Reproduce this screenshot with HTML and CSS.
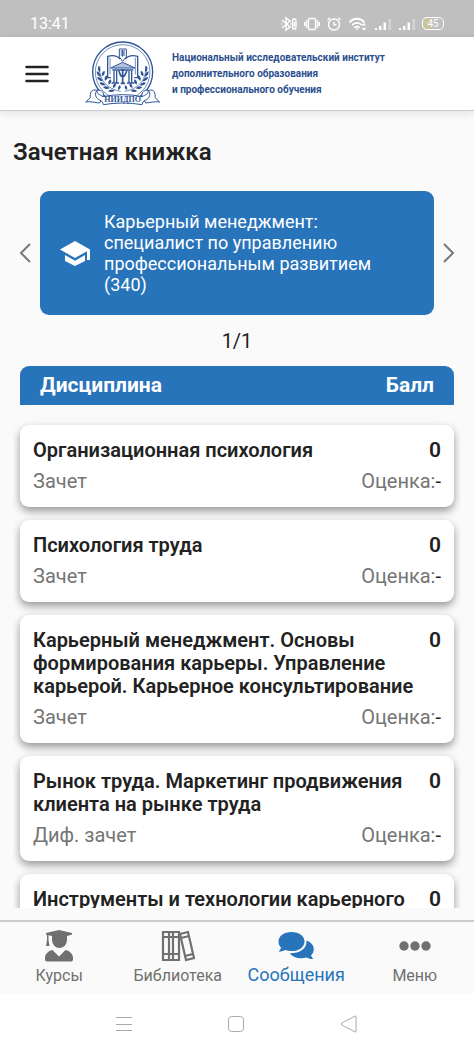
FILE: index.html
```
<!DOCTYPE html>
<html lang="ru">
<head>
    <meta charset="UTF-8">
    <meta name="viewport" content="width=device-width, initial-scale=1.0">
    <title>Зачетная книжка</title>
    <link rel="stylesheet" href="styles.css">
</head>
<body>
    <div class="status-bar">
        <span class="clock">13:41</span>
        <div class="status-icons">
            <svg width="18" height="16" viewBox="0 0 18 16" fill="none" stroke="#fff" stroke-width="1.4">
                <path d="M2 4l8 7-4 3V2l4 3-8 7M1 8h1M10 8h1"/>
                <rect x="12.500" y="3" width="3.500" height="10" rx="1.500"/>
                <path d="M14.300 6v5"/>
            </svg>
            <svg width="16" height="16" viewBox="0 0 16 16" fill="none" stroke="#fff" stroke-width="1.400">
                <rect x="4.500" y="2.500" width="7" height="11" rx="1"/>
                <path d="M2.500 4v8M13.500 4v8M.7 6v4M15.300 6v4"/>
            </svg>
            <svg width="16" height="16" viewBox="0 0 16 16" fill="none" stroke="#fff" stroke-width="1.400">
                <circle cx="8" cy="8.500" r="5.500"/>
                <path d="M8 5.500v3.200h2.500M1.500 4l2.500-2.300M14.500 4L12 1.700"/>
            </svg>
            <svg width="20" height="16" viewBox="0 0 20 16" fill="none" stroke="#fff" stroke-width="1.800">
                <path d="M1.500 6.500c4-5 11-5 15 0M4 9.200c3-3 7-3 10 0M6.500 11.800c1.500-1.500 3.500-1.500 5 0"/>
                <path d="M9 12.500v1.500M14.500 9.500l1.500-1.500 1.500 1.500M14.500 12l1.500 1.500 1.500-1.500" stroke-width="1.500"/>
            </svg>
            <svg width="18" height="16" viewBox="0 0 18 16" fill="#fff">
                <path d="M1 12h2v2H1zM5 10h2.500v4H5zM9.500 6.500H12V14H9.500z"/>
                <path d="M14.500 3H17v11h-2.500z" opacity=".35"/>
            </svg>
            <svg width="18" height="16" viewBox="0 0 18 16" fill="#fff">
                <path d="M1 12h2v2H1zM5 10h2.500v4H5zM9.500 6.500H12V14H9.500z"/>
                <path d="M14.500 3H17v11h-2.500z" opacity=".35"/>
            </svg>
            <span class="battery">45</span>
        </div>
    </div>

    <header class="header">
        <button class="menu-btn" type="button" aria-label="Открыть меню">
            <svg width="24" height="18" viewBox="0 0 24 18" stroke="#222" stroke-width="2.500" stroke-linecap="round">
                <path d="M1.500 2h21M1.500 9h21M1.500 16h21"/>
            </svg>
        </button>
        <a class="logo" href="#">
            <svg class="emblem" width="76" height="66" viewBox="0 0 228 198" fill="none" stroke="#2f5597" stroke-width="3">
                <circle cx="113" cy="93" r="90" stroke-width="4"/>
                <circle cx="113" cy="93" r="82" stroke-width="2"/>
                <!-- book and pen -->
                <path d="M78 110H68V46c16-4 29-2 37 8M148 110h10V46c-16-4-29-2-37 8" stroke-width="4"/>
                <path d="M75 100V50M151 100V50" stroke-width="2"/>
                <path d="M103 24h21v24l-11 13-10-13z"/>
                <path d="M107 30h13M107 36h13M107 42h13M113 27v20"/>
                <!-- temple -->
                <path d="M77 81l36-17 37 17z" fill="#2f5597" fill-opacity=".35"/>
                <path d="M82 87h63M87 90v34M95 90v34M132 90v34M140 90v34M80 126h22M126 126h22" stroke-width="4"/>
                <path d="M100 89c5 0 3 18 13 18s9-18 14-18M113 87v39M107 127h13M109 87h9" stroke-width="5"/>
                <!-- laurel -->
                <path d="M45 75c-6 36 18 68 62 76M181 75c6 36-18 68-62 76" stroke-width="2"/>
                <g fill="#2f5597" stroke="none">
                    <path d="M44 94q-9-9-3-20q8 9 3 20zM47 108q-13-5-12-17q12 4 12 17zM53 121q-14-1-17-13q14 0 17 13zM62 133q-13 3-19-8q12-5 19 8zM74 142q-12 6-20-3q11-8 20 3zM89 149q-10 8-20 1q9-9 20-1zM51 106q-3-12 7-17q5 10-7 17zM60 120q-4-11 5-17q7 9-5 17zM71 131q-4-11 6-16q6 10-6 16zM84 141q-2-11 8-14q4 10-8 14zM100 147q-3-10 5-14q6 8-5 14z"/>
                    <path d="M182 94q9-9 3-20q-8 9-3 20zM179 108q13-5 12-17q-12 4-12 17zM173 121q14-1 17-13q-14 0-17 13zM164 133q13 3 19-8q-12-5-19 8zM152 142q12 6 20-3q-11-8-20 3zM137 149q10 8 20 1q-9-9-20-1zM175 106q3-12-7-17q-5 10 7 17zM166 120q4-11-5-17q-7 9 5 17zM155 131q4-11-6-16q-6 10 6 16zM142 141q2-11-8-14q-4 10 8 14zM126 147q3-10-5-14q-6 8 5 14z"/>
                </g>
                <!-- ribbon -->
                <path d="M36 148C18 143 14 157 16 170l-14 13c14-3 27 2 42 3l7-14M190 148c18-5 22 9 20 22l14 13c-14-3-27 2-42 3l-7-14" fill="#fff"/>
                <path d="M37 147c14 0 22 9 17 20q59-12 118 0c-5-11 3-20 17-20 10 10 6 26-9 31q-8 3-9 13-58-10-116 0-1-10-9-13c-15-5-19-21-9-31z" fill="#fff"/>
                <path d="M37 147c-3 14 8 13 17 20M189 147c3 14-8 13-17 20"/>
                <text class="emblem-text" x="113" y="183">НИИДПО</text>
            </svg>
            <span class="logo-text">Национальный исследовательский институт<br>дополнительного образования<br>и профессионального обучения</span>
        </a>
    </header>

    <main class="content">
        <h1>Зачетная книжка</h1>

        <div class="slider">
            <button class="arrow" type="button" aria-label="Назад">
                <svg width="12" height="20" viewBox="0 0 12 20" fill="none" stroke="#777" stroke-width="2"><path d="M11 1L2 10l9 9"/></svg>
            </button>
            <div class="program">
                <svg width="30" height="25" viewBox="0 0 30 25" fill="#fff">
                    <path d="M15 0L0 8.500 15 17l12-6.800V19h3V8.500z"/>
                    <path d="M5 14v6l10 5 10-5v-6l-10 5.700z"/>
                </svg>
                <p>Карьерный менеджмент: специалист по управлению профессиональным развитием (340)</p>
            </div>
            <button class="arrow" type="button" aria-label="Вперед">
                <svg width="12" height="20" viewBox="0 0 12 20" fill="none" stroke="#777" stroke-width="2"><path d="M1 1l9 9-9 9"/></svg>
            </button>
        </div>
        <div class="counter">1/1</div>

        <div class="list-head">
            <span>Дисциплина</span>
            <span>Балл</span>
        </div>
        <ul class="list">
            <li class="card">
                <div class="card-row title"><h2>Организационная психология</h2><b>0</b></div>
                <div class="card-row meta"><span>Зачет</span><span>Оценка:<i>-</i></span></div>
            </li>
            <li class="card">
                <div class="card-row title"><h2>Психология труда</h2><b>0</b></div>
                <div class="card-row meta"><span>Зачет</span><span>Оценка:<i>-</i></span></div>
            </li>
            <li class="card">
                <div class="card-row title"><h2>Карьерный менеджмент. Основы формирования карьеры. Управление карьерой. Карьерное консультирование</h2><b>0</b></div>
                <div class="card-row meta"><span>Зачет</span><span>Оценка:<i>-</i></span></div>
            </li>
            <li class="card">
                <div class="card-row title"><h2>Рынок труда. Маркетинг продвижения клиента на рынке труда</h2><b>0</b></div>
                <div class="card-row meta"><span>Диф. зачет</span><span>Оценка:<i>-</i></span></div>
            </li>
            <li class="card">
                <div class="card-row title"><h2>Инструменты и технологии карьерного</h2><b>0</b></div>
            </li>
        </ul>
    </main>

    <nav class="tabs">
        <a class="tab" href="#">
            <svg width="28" height="32" viewBox="0 0 28 32" fill="currentColor">
                <path d="M14 0L1 3v1.500l1 .3V10l-1 6h3.500l-1-6V5.300L7 6v4a7.500 8 0 0 0 15 0V6l5-1.500V3z"/>
                <path d="M0 29.500V28c0-4 3-7 7.500-8L14 26.500 20.500 20c4.500 1 7.500 4 7.500 8v1.500a2 2 0 0 1-2 2H2a2 2 0 0 1-2-2z"/>
            </svg>
            <span>Курсы</span>
        </a>
        <a class="tab" href="#">
            <svg width="34" height="32" viewBox="0 0 34 32" fill="none" stroke="currentColor" stroke-width="2.200">
                <path d="M2 2h16v28H2zM8 2v28M12 2v28M2 7h16M2 24h16"/>
                <path d="M19 4l8-2 6 26-8 2zM20 8l8-2M24 26l8-2"/>
            </svg>
            <span>Библиотека</span>
        </a>
        <a class="tab active" href="#">
            <svg width="36" height="30" viewBox="0 0 36 30" fill="currentColor">
                <path d="M13.500 1C6 1 .5 5 .5 10.500c0 2.500 1 4.500 2.500 6C2.700 18.500 1.500 19.500.5 20.500c2.500.2 5-.5 7-1.500 1.900.8 4 1.100 6 1.100 7.500 0 13-4 13-9.600S21 1 13.500 1z"/>
                <path d="M28.300 9.500c1.200 7-5.300 12.700-16.300 12.700 2.800 4.500 10 6.300 16.500 4.300 2 1 4.500 1.900 7 1.500-1.200-1-2-2.200-2.400-3.800 4.700-4.700 3.200-12-4.800-14.700z"/>
            </svg>
            <span>Сообщения</span>
        </a>
        <a class="tab" href="#">
            <svg width="32" height="32" viewBox="0 0 32 32" fill="currentColor">
                <circle cx="5" cy="16" r="4.700"/><circle cx="16" cy="16" r="4.700"/><circle cx="27" cy="16" r="4.700"/>
            </svg>
            <span>Меню</span>
        </a>
    </nav>

    <div class="system-bar">
        <button type="button" aria-label="Приложения">
            <svg width="16" height="18" viewBox="0 0 16 18" stroke="#aaa"><path d="M0 2.500h16M0 9.500h16M0 15.500h16"/></svg>
        </button>
        <button type="button" aria-label="Домой">
            <svg width="18" height="18" viewBox="0 0 18 18" fill="none" stroke="#aaa"><rect x="1.500" y="1.500" width="15" height="15" rx="3"/></svg>
        </button>
        <button type="button" aria-label="Назад">
            <svg width="18" height="18" viewBox="0 0 18 18" fill="none" stroke="#aaa" stroke-linejoin="round"><path d="M15 1L2 8q-1.500 1 0 2l13 7q1 .2 1-1V2q0-1.200-1-1z"/></svg>
        </button>
    </div>
</body>
</html>
```
FILE: styles.css
```
* {
    box-sizing: border-box;
}
body {
    display: flex;
    flex-direction: column;
    height: 100vh;
    margin: 0;
    font-family: Roboto, sans-serif;
    font-size: 20px;
    color: #222;
    background: #fafafa;
}
h1, h2, p, ul {
    margin: 0;
    padding: 0;
}
button {
    padding: 0;
    border: none;
    background: none;
    cursor: pointer;
}
a {
    color: inherit;
    text-decoration: none;
}
svg {
    display: block;
    flex-shrink: 0;
}
.status-bar {
    display: flex;
    justify-content: space-between;
    align-items: center;
    padding: 10px 30px 0;
    height: 37px;
    flex-shrink: 0;
    background: #bfbfbf;
    color: #fff;
}
.clock {
    font-size: 16px;
}
.status-icons {
    display: flex;
    align-items: center;
    gap: 6px;
}
.battery {
    width: 22px;
    border: 1px solid #fff;
    border-radius: 5px;
    background: linear-gradient(90deg, #c9c3a0 45%, transparent 45%);
    font-size: 10px;
    line-height: 11px;
    text-align: center;
}
.header {
    display: flex;
    align-items: center;
    gap: 36px;
    height: 74px;
    padding: 0 25px;
    flex-shrink: 0;
    background: #fff;
    border-bottom: 1px solid #ccc;
    box-shadow: 0 2px 8px rgba(0, 0, 0, 0.1);
}
.logo {
    display: flex;
    align-items: center;
    gap: 11px;
}
.emblem-text {
    font-family: "Liberation Serif", serif;
    font-size: 24px;
    font-weight: bold;
    text-anchor: middle;
    fill: #2f5597;
    stroke: none;
}
.logo-text {
    font-size: 10px;
    font-weight: bold;
    line-height: 16px;
    white-space: nowrap;
    color: #2b4f8e;
}
.content {
    display: flex;
    flex-direction: column;
    flex: 1;
    min-height: 0;
    padding: 26px 13px 12px;
}
h1 {
    font-size: 24px;
    font-weight: 600;
    line-height: 30px;
}
.slider {
    display: flex;
    align-items: center;
    justify-content: space-between;
    gap: 9px;
    margin-top: 24px;
    padding: 0 6px;
}
.program {
    display: flex;
    align-items: center;
    gap: 14px;
    flex: 1;
    padding: 20px;
    border-radius: 9px;
    background: #2874bb;
    color: #fff;
    font-size: 18px;
    line-height: 21px;
}
.counter {
    padding: 14px 0 13px;
    line-height: 24px;
    text-align: center;
}
.list-head {
    display: flex;
    justify-content: space-between;
    margin: 0 7px;
    padding: 0 20px;
    border-radius: 9px 9px 0 0;
    background: #2874bb;
    color: #fff;
    font-size: 21px;
    font-weight: bold;
    line-height: 39px;
}
.list {
    display: flex;
    flex-direction: column;
    gap: 13px;
    flex: 1;
    min-height: 0;
    margin-top: 10px;
    padding: 10px 7px 0;
    overflow: hidden;
    list-style: none;
}
.card {
    flex-shrink: 0;
    padding: 14px 13px;
    border-radius: 9px;
    background: #fff;
    box-shadow: 0 4px 9px rgba(0, 0, 0, 0.4);
    line-height: 23px;
}
.card-row {
    display: flex;
    justify-content: space-between;
    gap: 8px;
}
.title b {
    font-size: 21px;
    font-weight: 600;
}
h2 {
    font-size: 20px;
    font-weight: 600;
}
.meta {
    margin-top: 8px;
    color: #757575;
}
.meta i {
    font-style: normal;
    color: #222;
}
.tabs {
    display: grid;
    grid-template-columns: repeat(4, 1fr);
    flex-shrink: 0;
    height: 74px;
    border-top: 2px solid #ccc;
}
.tab {
    display: flex;
    flex-direction: column;
    align-items: center;
    justify-content: center;
    gap: 3px;
    font-size: 16px;
    line-height: 22px;
    color: #707070;
}
.tab.active {
    font-size: 18px;
    color: #2874bb;
}
.system-bar {
    display: flex;
    justify-content: center;
    align-items: center;
    gap: 95px;
    flex-shrink: 0;
    height: 59px;
    background: #fff;
}
```
